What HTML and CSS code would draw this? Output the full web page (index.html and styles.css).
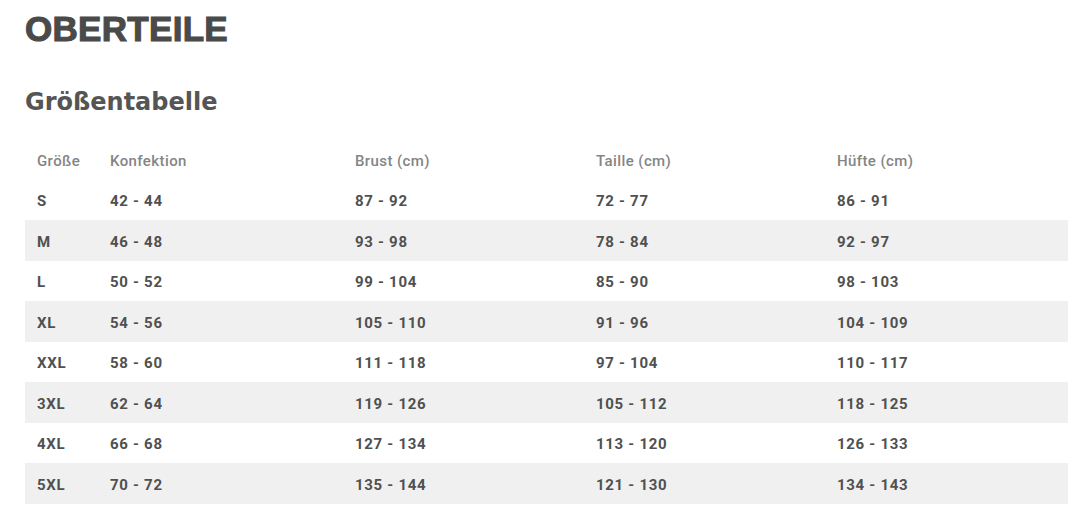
FILE: index.html
```html
<!DOCTYPE html>
<html lang="de">
<head>
<meta charset="utf-8">
<title>Oberteile – Größentabelle</title>
<link rel="stylesheet" href="styles.css">
</head>
<body>
<main class="page">
  <h1 class="title">OBERTEILE</h1>
  <h2 class="subtitle">Größentabelle</h2>
  <table class="sizes">
    <colgroup>
      <col class="c-size">
      <col class="c-konf">
      <col class="c-mid">
      <col class="c-mid">
      <col class="c-last">
    </colgroup>
    <thead>
      <tr><th>Größe</th><th>Konfektion</th><th>Brust (cm)</th><th>Taille (cm)</th><th>Hüfte (cm)</th></tr>
    </thead>
    <tbody>
      <tr><td>S</td><td>42 - 44</td><td>87 - 92</td><td>72 - 77</td><td>86 - 91</td></tr>
      <tr><td>M</td><td>46 - 48</td><td>93 - 98</td><td>78 - 84</td><td>92 - 97</td></tr>
      <tr><td>L</td><td>50 - 52</td><td>99 - 104</td><td>85 - 90</td><td>98 - 103</td></tr>
      <tr><td>XL</td><td>54 - 56</td><td>105 - 110</td><td>91 - 96</td><td>104 - 109</td></tr>
      <tr><td>XXL</td><td>58 - 60</td><td>111 - 118</td><td>97 - 104</td><td>110 - 117</td></tr>
      <tr><td>3XL</td><td>62 - 64</td><td>119 - 126</td><td>105 - 112</td><td>118 - 125</td></tr>
      <tr><td>4XL</td><td>66 - 68</td><td>127 - 134</td><td>113 - 120</td><td>126 - 133</td></tr>
      <tr><td>5XL</td><td>70 - 72</td><td>135 - 144</td><td>121 - 130</td><td>134 - 143</td></tr>
    </tbody>
  </table>
</main>
</body>
</html>
```

FILE: styles.css
```css
html, body {
  margin: 0;
  padding: 0;
  background: #ffffff;
}

.page {
  padding: 9px 12px 0 25px;
}

.title {
  margin: 0;
  font-family: "Liberation Sans", Arial, sans-serif;
  font-weight: 700;
  font-size: 35px;
  line-height: 40px;
  color: #4a4a4a;
  letter-spacing: 0.3px;
  -webkit-text-stroke: 1.1px #4a4a4a;
}

.subtitle {
  margin: 39px 0 0 0;
  font-family: "DejaVu Sans", sans-serif;
  font-weight: 700;
  font-size: 24px;
  line-height: 28px;
  color: #555555;
}

.sizes {
  margin-top: 23px;
  width: 1043px;
  border-collapse: collapse;
  table-layout: fixed;
  font-family: Roboto, "Liberation Sans", sans-serif;
  font-size: 15px;
}

.c-size { width: 73px; }
.c-konf { width: 245px; }
.c-mid { width: 241px; }
.c-last { width: 243px; }

.sizes th,
.sizes td {
  height: 40.5px;
  padding: 3px 0 0 12px;
  text-align: left;
  vertical-align: middle;
  white-space: nowrap;
  box-sizing: border-box;
}

.sizes th {
  font-weight: 500;
  color: #858585;
  letter-spacing: 0.4px;
}

.sizes td {
  font-weight: 700;
  color: #505050;
  letter-spacing: 0.7px;
}

.sizes tbody tr:nth-child(even) {
  background: #f0f0f0;
}
```
